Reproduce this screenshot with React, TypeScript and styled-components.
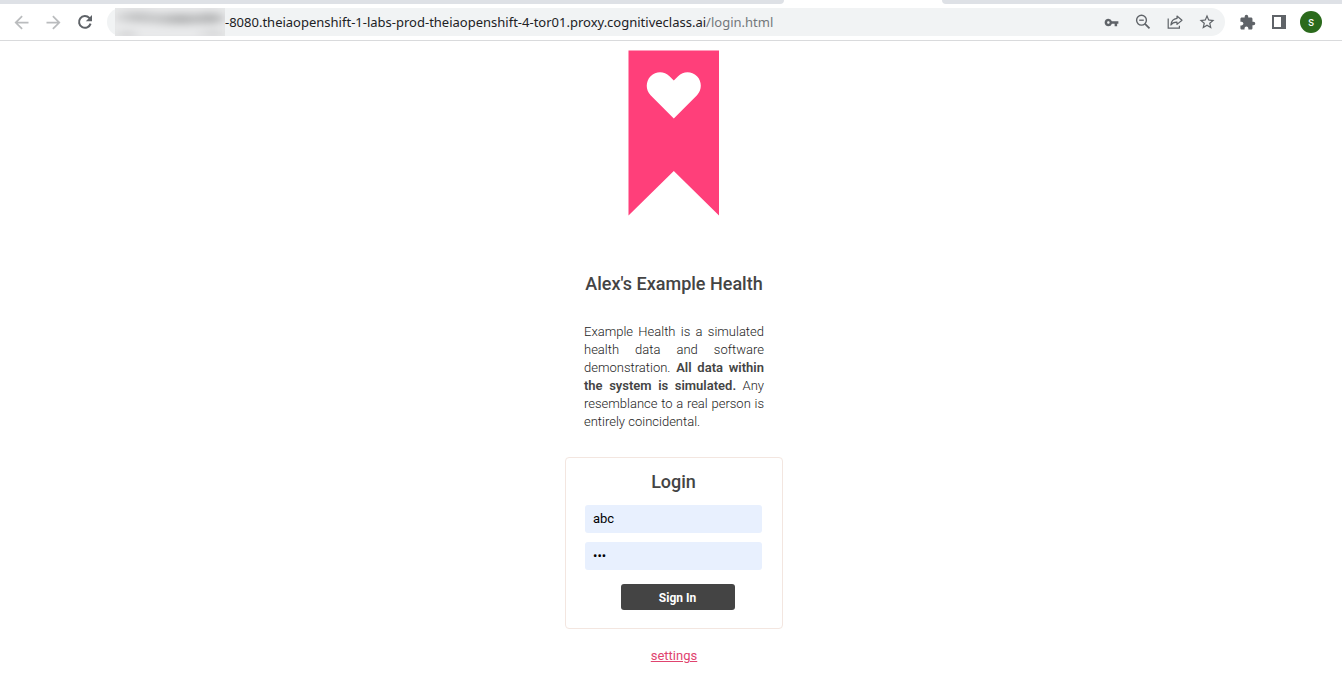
import React, { useState } from "react";
import styled, { createGlobalStyle } from "styled-components";
import {
  MdArrowBack,
  MdArrowForward,
  MdVpnKey,
  MdStarBorder,
  MdExtension,
} from "react-icons/md";

const GlobalStyle = createGlobalStyle`
  * { box-sizing: border-box; }
  body {
    margin: 0;
    background: #ffffff;
    color: #444444;
    font-family: Roboto, "Liberation Sans", sans-serif;
    font-size: 13px;
  }
`;

const TabStrip = styled.div`
  display: flex;
  height: 4px;
  background: #ffffff;
`;

const StripSide = styled.div<{ $grow: number; $side: "left" | "right" }>`
  flex: ${(p) => p.$grow} 0 0;
  background: #dee1e6;
  border-radius: ${(p) => (p.$side === "left" ? "0 0 8px 0" : "0 0 0 8px")};
`;

const ActiveTab = styled.div`
  flex: 0 0 158px;
`;

const Toolbar = styled.header`
  display: flex;
  align-items: center;
  height: 37px;
  padding: 0 20px 0 10px;
  border-bottom: 1px solid #d9dadc;
`;

const IconButton = styled.button<{ $muted?: boolean }>`
  display: flex;
  flex: none;
  align-items: center;
  justify-content: center;
  width: 32px;
  height: 28px;
  padding: 0;
  border: 0;
  background: none;
  color: ${(p) => (p.$muted ? "#babcbe" : "#5f6368")};
`;

const NavGroup = styled.nav`
  display: flex;
  width: 97px;
  margin-left: -5px;
`;

const AddressBar = styled.div`
  display: flex;
  flex: 1;
  align-items: center;
  height: 28px;
  margin: 0 6px 0 5px;
  padding: 0 2px 0 8px;
  border-radius: 14px;
  background: #f1f3f4;
`;

const Redacted = styled.span`
  flex: none;
  width: 110px;
  height: 28px;
  overflow: hidden;
  background: #e6e7e8;

  &::before {
    content: "";
    display: block;
    height: 28px;
    filter: blur(3px);
    background:
      radial-gradient(ellipse 30px 9px at 22px 9px, #bdbebf, transparent),
      radial-gradient(ellipse 50px 9px at 66px 11px, #adaeaf, transparent),
      radial-gradient(ellipse 20px 9px at 96px 10px, #b6b7b8, transparent),
      radial-gradient(ellipse 16px 5px at 12px 27px, #c4c5c6, transparent),
      radial-gradient(ellipse 20px 6px at 98px 26px, #d0d1d2, transparent),
      #e9eaeb;
  }
`;

const Url = styled.div`
  flex: 1;
  overflow: hidden;
  color: #202124;
  font: 13px/20px "Noto Sans", "Open Sans", sans-serif;
  white-space: nowrap;
`;

const UrlPath = styled.span`
  color: #73777b;
`;

const Avatar = styled.button`
  width: 22px;
  height: 22px;
  margin: 0 0 0 5px;
  padding: 0;
  border: 0;
  border-radius: 50%;
  background: #2b6a1c;
  color: #ffffff;
  font: 12px/22px Roboto, sans-serif;
`;

const Page = styled.main`
  display: flex;
  flex-direction: column;
  align-items: center;
  padding: 9px 0 24px 6px;
`;

const Ribbon = styled.svg`
  display: block;
  width: 92px;
  height: 166px;
`;

const Title = styled.h1`
  margin: 56px 0 27px;
  font-size: 18px;
  font-weight: 500;
  line-height: 24px;
`;

const Intro = styled.p`
  width: 180px;
  margin: 0;
  color: #1c1c1c;
  font-weight: 300;
  line-height: 18px;
  text-align: justify;
`;

const Strong = styled.strong`
  color: #444444;
  font-weight: 600;
`;

const LoginCard = styled.form`
  display: flex;
  flex-direction: column;
  align-items: center;
  width: 218px;
  margin-top: 26px;
  padding: 12px 20px 18px 19px;
  border: 1px solid #f3e6e0;
  border-radius: 4px;
`;

const CardTitle = styled.h2`
  margin: 0 0 11px;
  font-size: 18px;
  font-weight: 500;
  line-height: 24px;
`;

const Field = styled.input`
  width: 100%;
  height: 28px;
  margin: 0 0 9px;
  padding: 0 8px 1px;
  border: 0;
  border-radius: 3px;
  background: #e8f0fe;
  color: #000000;
  font: 13px/18px Roboto, sans-serif;
`;

const SignIn = styled.button`
  width: 114px;
  height: 26px;
  margin: 5px 0 0 8px;
  padding: 1px 0 0;
  border: 0;
  border-radius: 3px;
  background: #444444;
  color: #ffffff;
  font: 700 12px/24px Roboto, sans-serif;
`;

const SettingsLink = styled.a`
  margin-top: 18px;
  color: #e0436f;
  line-height: 18px;
  text-decoration: underline;
`;

const ReloadIcon = () => (
  <svg width="16" height="16" viewBox="0 0 16 16" fill="none" stroke="currentColor">
    <path d="M13.6 9.6A5.9 5.9 0 1 1 12.3 3.9L13.2 5" strokeWidth="2" />
    <path d="M15 1V7.2H8.8Z" fill="currentColor" stroke="none" />
  </svg>
);

const ZoomOutIcon = () => (
  <svg width="16" height="16" viewBox="0 0 16 16" fill="none" stroke="currentColor">
    <circle cx="6.5" cy="6.2" r="4.9" strokeWidth="1.4" />
    <path d="M4.2 6.2H8.8" strokeWidth="1.3" />
    <path d="M10 9.8L14.5 14.3" strokeWidth="1.8" />
  </svg>
);

const ShareIcon = () => (
  <svg width="16" height="16" viewBox="0 0 16 16" fill="none" stroke="currentColor" strokeWidth="1.2">
    <path d="M1.2 4.5V14.2H12.4V11.8" />
    <path
      d="M10 2L15 6.2L10 10.4V8.2C7 8.1 5.2 8.9 3.9 11C4.2 7.2 6.4 4.9 10 4.4Z"
      strokeLinejoin="round"
    />
  </svg>
);

const SidePanelIcon = () => (
  <svg width="14" height="14" viewBox="0 0 14 14" fill="currentColor">
    <path fillRule="evenodd" d="M0 0H14V14H0ZM2 2V12H9V2Z" />
  </svg>
);

export default function App() {
  const [user, setUser] = useState("abc");
  const [password, setPassword] = useState("abc");

  return (
    <>
      <GlobalStyle />
      <TabStrip>
        <StripSide $grow={49} $side="left" />
        <ActiveTab />
        <StripSide $grow={25} $side="right" />
      </TabStrip>
      <Toolbar>
        <NavGroup aria-label="Browser navigation">
          <IconButton $muted aria-label="Back"><MdArrowBack size={21} /></IconButton>
          <IconButton $muted aria-label="Forward"><MdArrowForward size={21} /></IconButton>
          <IconButton aria-label="Reload"><ReloadIcon /></IconButton>
        </NavGroup>
        <AddressBar>
          <Redacted />
          <Url role="textbox" aria-label="Address" tabIndex={0}>
            -8080.theiaopenshift-1-labs-prod-theiaopenshift-4-tor01.proxy.cognitiveclass.ai
            <UrlPath>/login.html</UrlPath>
          </Url>
          <IconButton aria-label="Passwords"><MdVpnKey size={15} /></IconButton>
          <IconButton aria-label="Zoom"><ZoomOutIcon /></IconButton>
          <IconButton aria-label="Share"><ShareIcon /></IconButton>
          <IconButton aria-label="Bookmark"><MdStarBorder size={18} /></IconButton>
        </AddressBar>
        <IconButton aria-label="Extensions"><MdExtension size={17} /></IconButton>
        <IconButton aria-label="Side panel"><SidePanelIcon /></IconButton>
        <Avatar aria-label="Profile">s</Avatar>
      </Toolbar>
      <Page>
        <Ribbon viewBox="0 0 92 166" aria-hidden="true">
          <path fill="#ff3f7a" d="M0.5 0.5H91V165.5L45.8 121L0.5 165.5Z" />
          <path
            fill="#ffffff"
            d="M45.8 68.5L22.6 45.2C17.5 40 17.5 31.5 22.6 26.3C28 21 36.2 21 41.5 26.3L45.8 30.4L50.1 26.3C55.4 21 63.6 21 69 26.3C74.1 31.5 74.1 40 69 45.2Z"
          />
        </Ribbon>
        <Title>Alex's Example Health</Title>
        <Intro>
          Example Health is a simulated health data and software demonstration.{" "}
          <Strong>All data within the system is simulated.</Strong> Any resemblance to a real
          person is entirely coincidental.
        </Intro>
        <LoginCard onSubmit={(e) => e.preventDefault()}>
          <CardTitle>Login</CardTitle>
          <Field
            aria-label="Username"
            type="text"
            value={user}
            onChange={(e) => setUser(e.target.value)}
          />
          <Field
            aria-label="Password"
            type="password"
            value={password}
            onChange={(e) => setPassword(e.target.value)}
          />
          <SignIn type="submit">Sign In</SignIn>
        </LoginCard>
        <SettingsLink href="#settings">settings</SettingsLink>
      </Page>
    </>
  );
}
